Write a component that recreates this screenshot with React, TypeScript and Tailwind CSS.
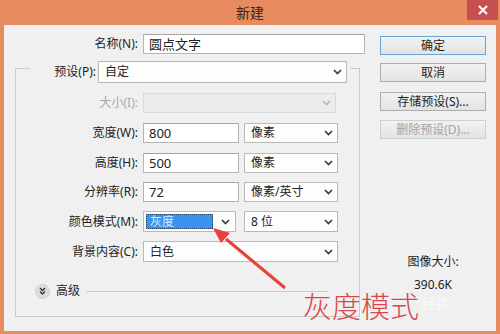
import React from "react";

const Chevron = ({ color = "#3a3a3a" }: { color?: string }) => (
  <svg width="9" height="6" viewBox="0 0 9 6" className="shrink-0">
    <polyline points="1,1 4.5,4.5 8,1" fill="none" stroke={color} strokeWidth="1.7" />
  </svg>
);

function Select({ value, w, h = "h-[20px]", disabled }: { value: string; w: string; h?: string; disabled?: boolean }) {
  return (
    <div
      className={`${w} ${h} flex items-center justify-between pl-[6px] pr-[4px] border ${
        disabled ? "border-[#d9d9d9] bg-[#ececec]" : "border-[#b9b9b9] bg-[#fdfdfd]"
      }`}
    >
      <span className="text-[12px] text-[#222] leading-none">{value}</span>
      <Chevron color={disabled ? "#b8b8b8" : "#3a3a3a"} />
    </div>
  );
}

function Input({ value, w }: { value: string; w: string }) {
  return (
    <div className={`${w} h-[20px] flex items-center pl-[5px] border border-[#b4b4b4] border-t-[#a5a5a5] bg-white`}>
      <span className="text-[13px] text-[#222] leading-none">{value}</span>
    </div>
  );
}

function Label({ text, w = "w-[122px]", muted }: { text: string; w?: string; muted?: boolean }) {
  return (
    <span className={`${w} shrink-0 text-right text-[12px] ${muted ? "text-[#a8a8a8]" : "text-[#1e1e1e]"}`}>{text}</span>
  );
}

function Btn({ text, mt, primary, disabled }: { text: string; mt: string; primary?: boolean; disabled?: boolean }) {
  return (
    <div
      className={`${mt} h-[19px] w-[106px] flex items-center justify-center text-[12px] border bg-gradient-to-b from-[#f2f2f2] to-[#e3e3e3] ${
        primary ? "border-[#6aa3d6]" : disabled ? "border-[#cfcfcf]" : "border-[#adadad]"
      } ${disabled ? "text-[#a3a3a3]" : "text-[#1e1e1e]"}`}
    >
      {text}
    </div>
  );
}

export default function App() {
  return (
    <div className="relative w-[500px] h-[334px] overflow-hidden bg-[#e98b60] font-['Noto_Sans','Noto_Sans_CJK_SC',sans-serif]">
      {/* title bar */}
      <div className="relative h-[25px] flex items-center justify-center">
        <span className="text-[14px] text-[#3d2317] mt-[-1px]">新建</span>
        <div className="absolute right-[2px] top-0 w-[31px] h-[20px] bg-[#c7504f] flex items-center justify-center">
          <svg width="10" height="10" viewBox="0 0 10 10">
            <path d="M1 1 L9 9 M9 1 L1 9" stroke="#fff" strokeWidth="2" />
          </svg>
        </div>
      </div>

      {/* body */}
      <div className="mx-[4px] h-[306px] bg-[#f0f0f0] flex">
        {/* left column */}
        <div className="w-[362px] shrink-0">
          <div className="mt-[9px] flex items-center">
            <Label text="名称(N):" w="w-[134px]" />
            <div className="ml-[5px]">
              <Input value="圆点文字" w="w-[222px]" />
            </div>
          </div>

          <div className="mt-[14px] ml-[11px] w-[345px] h-[249px] border border-[#cbcbcb]">
            <div className="-mt-[8px] ml-[14px] w-[320px] h-[22px] bg-[#f0f0f0] flex items-center">
              <span className="flex-1 text-right pr-[2px] text-[12px] text-[#1e1e1e]">预设(P):</span>
              <Select value="自定" w="w-[249px]" h="h-[22px]" />
              <span className="w-[3px]" />
            </div>

            <div className="mt-[10px] flex items-center gap-[5px]">
              <Label text="大小(I):" muted />
              <Select value="" w="w-[193px]" disabled />
            </div>
            <div className="mt-[10px] flex items-center gap-[5px]">
              <Label text="宽度(W):" />
              <Input value="800" w="w-[96px]" />
              <Select value="像素" w="w-[94px]" />
            </div>
            <div className="mt-[10px] flex items-center gap-[5px]">
              <Label text="高度(H):" />
              <Input value="500" w="w-[96px]" />
              <Select value="像素" w="w-[94px]" />
            </div>
            <div className="mt-[9px] flex items-center gap-[5px]">
              <Label text="分辨率(R):" />
              <Input value="72" w="w-[96px]" />
              <Select value="像素/英寸" w="w-[94px]" />
            </div>
            <div className="mt-[9px] flex items-center">
              <Label text="颜色模式(M):" />
              <div className="ml-[5px] w-[93px] h-[21px] flex items-center justify-between pl-[2px] pr-[5px] border border-[#b9b9b9] bg-[#fdfdfd]">
                <div className="w-[67px] h-[15px] bg-[#3b93ee] border border-dotted border-[#1d3f66] flex items-center pl-[3px]">
                  <span className="text-[12px] text-[#d6ebff] leading-none">灰度</span>
                </div>
                <Chevron />
              </div>
              <div className="ml-[8px]">
                <Select value="8 位" w="w-[94px]" h="h-[21px]" />
              </div>
            </div>
            <div className="mt-[9px] flex items-center gap-[5px]">
              <Label text="背景内容(C):" />
              <Select value="白色" w="w-[195px]" h="h-[21px]" />
            </div>

            <div className="mt-[21px] ml-[19px] mr-[31px] h-[16px] flex items-center">
              <div className="w-[15px] h-[15px] rounded-full bg-[#dcdcdc] border border-[#cfcfcf] flex items-center justify-center">
                <svg width="7" height="8" viewBox="0 0 7 8">
                  <polyline points="1,1 3.5,3.5 6,1" fill="none" stroke="#333" strokeWidth="1.4" />
                  <polyline points="1,4.5 3.5,7 6,4.5" fill="none" stroke="#333" strokeWidth="1.4" />
                </svg>
              </div>
              <span className="ml-[6px] text-[12px] text-[#1e1e1e]">高级</span>
              <div className="ml-[6px] flex-1 h-px bg-[#cbcbcb]" />
            </div>
          </div>
        </div>

        {/* right column */}
        <div className="ml-[14px] w-[106px] flex flex-col">
          <Btn text="确定" mt="mt-[11px]" primary />
          <Btn text="取消" mt="mt-[8px]" />
          <Btn text="存储预设(S)..." mt="mt-[10px]" />
          <Btn text="删除预设(D)..." mt="mt-[9px]" disabled />
          <span className="mt-[114px] text-center text-[12px] text-[#1e1e1e]">图像大小:</span>
          <span className="mt-[5px] text-center text-[12px] text-[#1e1e1e]">390.6K</span>
        </div>
      </div>

      {/* annotation overlay */}
      <svg className="absolute left-0 top-0 pointer-events-none" width="500" height="334">
        <line x1="285" y1="288" x2="226" y2="239" stroke="#e8403a" strokeWidth="3" />
        <polygon points="213,228 230,233 221,243" fill="#e8403a" />
      </svg>
      <span className="absolute left-[422px] top-[297px] text-[13px] text-white/70 leading-none">经验</span>
      <span className="absolute left-[303px] top-[292px] text-[29px] font-light text-[#d8474a] leading-none">灰度模式</span>
    </div>
  );
}
